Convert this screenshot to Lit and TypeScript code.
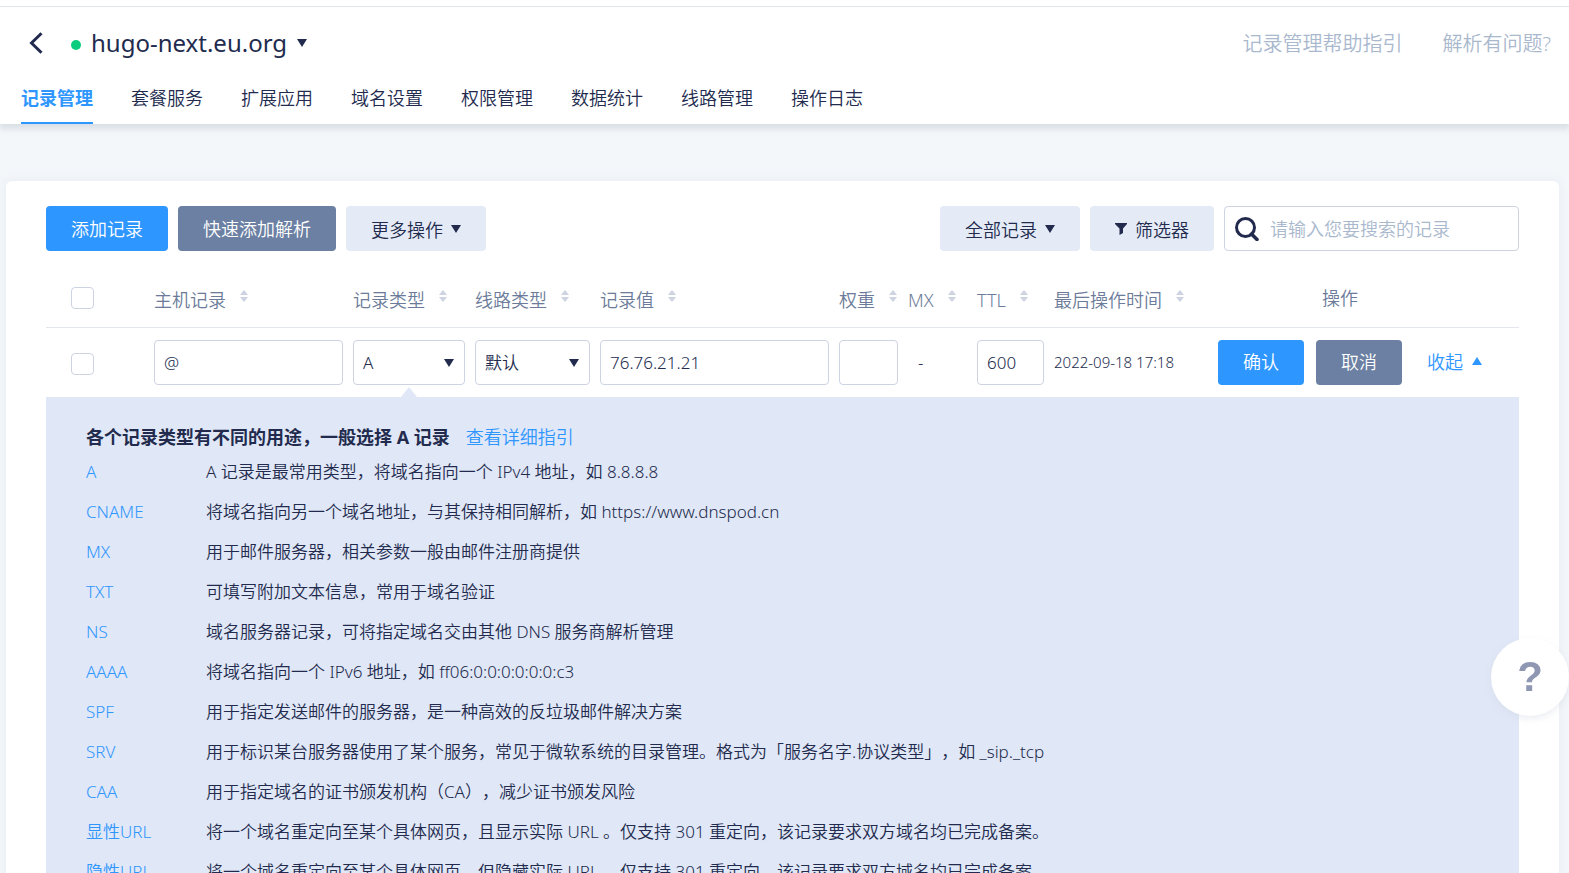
import { LitElement, html, css, svg } from "lit";
import { customElement, state } from "lit/decorators.js";

const TABS = ["记录管理", "套餐服务", "扩展应用", "域名设置", "权限管理", "数据统计", "线路管理", "操作日志"];

const RECORD_TYPES: [string, string][] = [
  ["A", "A 记录是最常用类型，将域名指向一个 IPv4 地址，如 8.8.8.8"],
  ["CNAME", "将域名指向另一个域名地址，与其保持相同解析，如 https://www.dnspod.cn"],
  ["MX", "用于邮件服务器，相关参数一般由邮件注册商提供"],
  ["TXT", "可填写附加文本信息，常用于域名验证"],
  ["NS", "域名服务器记录，可将指定域名交由其他 DNS 服务商解析管理"],
  ["AAAA", "将域名指向一个 IPv6 地址，如 ff06:0:0:0:0:0:0:c3"],
  ["SPF", "用于指定发送邮件的服务器，是一种高效的反垃圾邮件解决方案"],
  ["SRV", "用于标识某台服务器使用了某个服务，常见于微软系统的目录管理。格式为「服务名字.协议类型」，如 _sip._tcp"],
  ["CAA", "用于指定域名的证书颁发机构（CA），减少证书颁发风险"],
  ["显性URL", "将一个域名重定向至某个具体网页，且显示实际 URL 。仅支持 301 重定向，该记录要求双方域名均已完成备案。"],
  ["隐性URL", "将一个域名重定向至某个具体网页，但隐藏实际 URL 。仅支持 301 重定向，该记录要求双方域名均已完成备案。"],
];

const COLUMNS: [string, string][] = [
  ["host", "主机记录"],
  ["type", "记录类型"],
  ["line", "线路类型"],
  ["value", "记录值"],
  ["weight", "权重"],
  ["mx", "MX"],
  ["ttl", "TTL"],
  ["time", "最后操作时间"],
];

const caretDown = html`<svg class="caret" width="10" height="8" viewBox="0 0 10 8" aria-hidden="true">
  ${svg`<path d="M0 0h10L5 8z" fill="currentColor"/>`}
</svg>`;

const caretUp = html`<svg class="caret" width="10" height="8" viewBox="0 0 10 8" aria-hidden="true">
  ${svg`<path d="M0 8h10L5 0z" fill="currentColor"/>`}
</svg>`;

const sortIcon = html`<svg class="sort" width="8" height="12" viewBox="0 0 8 12" aria-hidden="true">
  ${svg`<path d="M0 5h8L4 0zM0 7h8L4 12z" fill="currentColor"/>`}
</svg>`;

const baseStyles = css`
  * {
    box-sizing: border-box;
  }
  button,
  input,
  select {
    font: inherit;
    color: inherit;
    margin: 0;
  }
  button {
    border: 0;
    background: none;
    padding: 0;
    cursor: pointer;
    white-space: nowrap;
  }
  a {
    text-decoration: none;
  }
  svg {
    display: block;
    flex: none;
  }
  .btn {
    display: inline-flex;
    align-items: center;
    gap: 8px;
    height: 45px;
    padding: 0 25px 2px;
    border-radius: 4px;
    font-size: 18px;
  }
  .primary {
    background: #2e96ff;
    color: #fff;
  }
  .slate {
    background: #6b80a2;
    color: #fff;
  }
  .soft {
    padding-bottom: 0;
    background: #e5ebf6;
  }
`;

@customElement("domain-header")
class DomainHeader extends LitElement {
  @state() active = 0;

  static styles = [
    baseStyles,
    css`
      :host {
        display: block;
        position: relative;
        padding-top: 6px;
        background: #fff;
        box-shadow: 0 4px 6px 1px #d9dfe6;
      }
      .inner {
        border-top: 1px solid #dfe5ec;
      }
      .title {
        display: flex;
        align-items: center;
        height: 72px;
        padding: 0 18px 0 29px;
      }
      .dot {
        width: 10px;
        height: 10px;
        margin: 4px 10px 0 28px;
        border-radius: 50%;
        background: #0bcd7d;
      }
      .domain {
        display: flex;
        align-items: center;
        gap: 10px;
        font-size: 24px;
        font-weight: 400;
        line-height: 32px;
      }
      .help {
        display: flex;
        gap: 40px;
        margin-left: auto;
        padding-bottom: 2px;
        font-size: 20px;
      }
      .help a {
        color: #a9b8cd;
      }
      .tabs {
        display: flex;
        gap: 38px;
        padding: 0 21px;
      }
      .tab {
        height: 45px;
        border-bottom: 2px solid transparent;
        font-size: 18px;
        line-height: 38px;
        color: inherit;
      }
      .tab.on {
        border-color: #2e96ff;
        color: #2e96ff;
        font-weight: 700;
      }
    `,
  ];

  render() {
    return html`<div class="inner">
      <div class="title">
        <button aria-label="返回">
          <svg width="14" height="22" viewBox="0 0 14 22">
            ${svg`<path d="M12.5 1.2L2.5 11l10 9.8" fill="none" stroke="#222b4e" stroke-width="3"/>`}
          </svg>
        </button>
        <span class="dot"></span>
        <button class="domain">hugo-next.eu.org ${caretDown}</button>
        <div class="help"><a href="#guide">记录管理帮助指引</a><a href="#faq">解析有问题?</a></div>
      </div>
      <nav class="tabs">
        ${TABS.map(
          (t, i) => html`<a
            href="#tab-${i}"
            class="tab ${i === this.active ? "on" : ""}"
            @click=${() => (this.active = i)}
            >${t}</a
          >`
        )}
      </nav>
    </div>`;
  }
}

@customElement("record-toolbar")
class RecordToolbar extends LitElement {
  static styles = [
    baseStyles,
    css`
      :host {
        display: flex;
        gap: 10px;
      }
      .spacer {
        flex: 1;
      }
      .search {
        display: flex;
        align-items: center;
        width: 295px;
        height: 45px;
        padding: 0 10px;
        gap: 11px;
        border: 1px solid #cdd3e1;
        border-radius: 4px;
      }
      .search input {
        flex: 1;
        min-width: 0;
        border: 0;
        padding: 0;
        outline: 0;
        background: none;
        font-size: 18px;
      }
      .search input::placeholder {
        color: #a9b8cd;
        opacity: 1;
      }
    `,
  ];

  render() {
    return html`
      <button class="btn primary">添加记录</button>
      <button class="btn slate">快速添加解析</button>
      <button class="btn soft">更多操作 ${caretDown}</button>
      <span class="spacer"></span>
      <button class="btn soft">全部记录 ${caretDown}</button>
      <button class="btn soft">
        <svg width="12" height="12" viewBox="0 0 12 12" aria-hidden="true">
          ${svg`<path d="M0 0h12v1L8 5.5V10L4.5 12V5.500L0 1z" fill="currentColor"/>`}
        </svg>
        筛选器
      </button>
      <label class="search">
        <svg width="24" height="24" viewBox="0 0 24 24" aria-hidden="true">
          ${svg`<circle cx="10.500" cy="10.500" r="9" fill="none" stroke="#222b4e" stroke-width="3"/>
            <path d="M16.500 17l5.500 5.500" stroke="#222b4e" stroke-width="3.500" stroke-linecap="round"/>`}
        </svg>
        <input type="text" placeholder="请输入您要搜索的记录" aria-label="搜索记录" />
      </label>
    `;
  }
}

@customElement("record-guide")
class RecordGuide extends LitElement {
  static styles = [
    baseStyles,
    css`
      :host {
        display: block;
        padding: 25px 40px 20px;
        background: #e0e7f6;
      }
      .head {
        display: flex;
        gap: 16px;
        font-size: 18px;
        line-height: 30px;
      }
      .head strong {
        font-weight: 700;
      }
      a {
        color: #2e96ff;
      }
      .list {
        display: grid;
        grid-template-columns: 120px 1fr;
        margin: 0;
        font-size: 17px;
        line-height: 40px;
      }
      dd {
        margin: 0;
      }
    `,
  ];

  render() {
    return html`
      <div class="head"><strong>各个记录类型有不同的用途，一般选择 A 记录</strong><a href="#detail">查看详细指引</a></div>
      <dl class="list">
        ${RECORD_TYPES.map(
          ([name, text]) => html`<dt><a href="#${name}">${name}</a></dt>
            <dd>${text}</dd>`
        )}
      </dl>
    `;
  }
}

@customElement("record-table")
class RecordTable extends LitElement {
  @state() open = true;

  static styles = [
    baseStyles,
    css`
      :host {
        display: block;
      }
      table {
        width: 100%;
        table-layout: fixed;
        border-collapse: collapse;
      }
      .c-check {
        width: 103px;
      }
      .c-host {
        width: 199px;
      }
      .c-type {
        width: 122px;
      }
      .c-line {
        width: 125px;
      }
      .c-weight,
      .c-mx {
        width: 69px;
      }
      .c-ttl {
        width: 77px;
      }
      .c-time {
        width: 140px;
      }
      .c-ops {
        width: 330px;
      }
      th,
      td {
        padding: 0 5px;
        text-align: left;
        font-weight: inherit;
      }
      th {
        height: 56px;
        border-bottom: 1px solid #e3e6ee;
        color: #6b7b99;
        font-size: 18px;
        line-height: 26px;
      }
      td {
        height: 70px;
        font-size: 17px;
      }
      .check {
        padding-left: 25px;
      }
      th.check {
        padding-bottom: 2px;
      }
      td.check {
        padding-top: 4px;
      }
      .box {
        display: block;
        appearance: none;
        width: 23px;
        height: 22px;
        border: 1px solid #cdd3e1;
        border-radius: 4px;
        background: #fff;
      }
      .box:checked {
        background: #2e96ff;
      }
      .label {
        display: flex;
        align-items: center;
        gap: 14px;
        padding-top: 3px;
        white-space: nowrap;
      }
      .sort {
        margin-bottom: 8px;
        color: #cdd3e1;
      }
      th.ops {
        padding: 0 28px 2px 0;
        text-align: center;
      }
      .field {
        display: block;
        width: 100%;
        height: 45px;
        padding: 0 9px;
        border: 1px solid #cdd3e1;
        border-radius: 4px;
        outline: 0;
        background: #fff;
        appearance: none;
      }
      .pick {
        position: relative;
        display: block;
      }
      .pick .caret {
        position: absolute;
        right: 11px;
        top: 19px;
        pointer-events: none;
      }
      td.type {
        position: relative;
      }
      td.type::after {
        content: "";
        position: absolute;
        left: 50%;
        bottom: 0;
        margin-left: -8px;
        border: 8px solid transparent;
        border-top: 0;
        border-bottom: 10px solid #e0e7f6;
      }
      td.mx {
        padding-left: 15px;
      }
      td.time {
        font-size: 15px;
        white-space: nowrap;
      }
      .actions {
        display: flex;
        align-items: center;
        gap: 12px;
        padding-left: 24px;
      }
      .toggle {
        display: inline-flex;
        align-items: center;
        gap: 9px;
        margin-left: 13px;
        padding-bottom: 2px;
        color: #2e96ff;
        font-size: 18px;
      }
      td.guide {
        padding: 0;
      }
    `,
  ];

  render() {
    return html`<table>
      <colgroup>
        <col class="c-check" />
        ${COLUMNS.map(([key]) => html`<col class="c-${key}" />`)}
        <col class="c-ops" />
      </colgroup>
      <thead>
        <tr>
          <th class="check"><input class="box" type="checkbox" aria-label="全选" /></th>
          ${COLUMNS.map(([, name]) => html`<th><span class="label">${name}${sortIcon}</span></th>`)}
          <th class="ops">操作</th>
        </tr>
      </thead>
      <tbody>
        <tr>
          <td class="check"><input class="box" type="checkbox" aria-label="选择记录" /></td>
          <td><input class="field" type="text" .value=${"@"} aria-label="主机记录" /></td>
          <td class="type">
            <span class="pick">
              <select class="field" aria-label="记录类型">
                ${RECORD_TYPES.map(([name]) => html`<option>${name}</option>`)}
              </select>
              ${caretDown}
            </span>
          </td>
          <td>
            <span class="pick">
              <select class="field" aria-label="线路类型"><option>默认</option></select>
              ${caretDown}
            </span>
          </td>
          <td><input class="field" type="text" .value=${"76.76.21.21"} aria-label="记录值" /></td>
          <td><input class="field" type="text" aria-label="权重" /></td>
          <td class="mx">-</td>
          <td><input class="field" type="text" .value=${"600"} aria-label="TTL" /></td>
          <td class="time">2022-09-18 17:18</td>
          <td>
            <div class="actions">
              <button class="btn primary">确认</button>
              <button class="btn slate">取消</button>
              <button class="toggle" @click=${() => (this.open = !this.open)}>
                收起 ${this.open ? caretUp : caretDown}
              </button>
            </div>
          </td>
        </tr>
        ${this.open
          ? html`<tr>
              <td class="guide" colspan="10"><record-guide></record-guide></td>
            </tr>`
          : ""}
      </tbody>
    </table>`;
  }
}

@customElement("app-root")
class AppRoot extends LitElement {
  static styles = [
    baseStyles,
    css`
      :host {
        display: block;
        min-height: 100vh;
        background: #f3f7fa;
        color: #222b4e;
        font-family: "Noto Sans", "Noto Sans CJK SC", sans-serif;
        font-size: 18px;
        font-weight: 350;
        text-spacing-trim: space-all;
      }
      .card {
        margin: 57px 10px 0 6px;
        padding: 25px 40px 40px;
        border-radius: 6px;
        background: #fff;
        box-shadow: 0 0 8px 2px #ebeff5;
      }
      record-table {
        margin-top: 20px;
      }
      .ask {
        position: fixed;
        right: 0;
        top: 638px;
        width: 78px;
        height: 78px;
        border-radius: 50%;
        background: #fff;
        box-shadow: 0 3px 6px #ccd5e066;
        color: #8f97b3;
        font: 700 42px/78px "Liberation Sans", sans-serif;
        text-align: center;
      }
    `,
  ];

  render() {
    return html`
      <domain-header></domain-header>
      <main class="card">
        <record-toolbar></record-toolbar>
        <record-table></record-table>
      </main>
      <button class="ask">?</button>
    `;
  }
}
